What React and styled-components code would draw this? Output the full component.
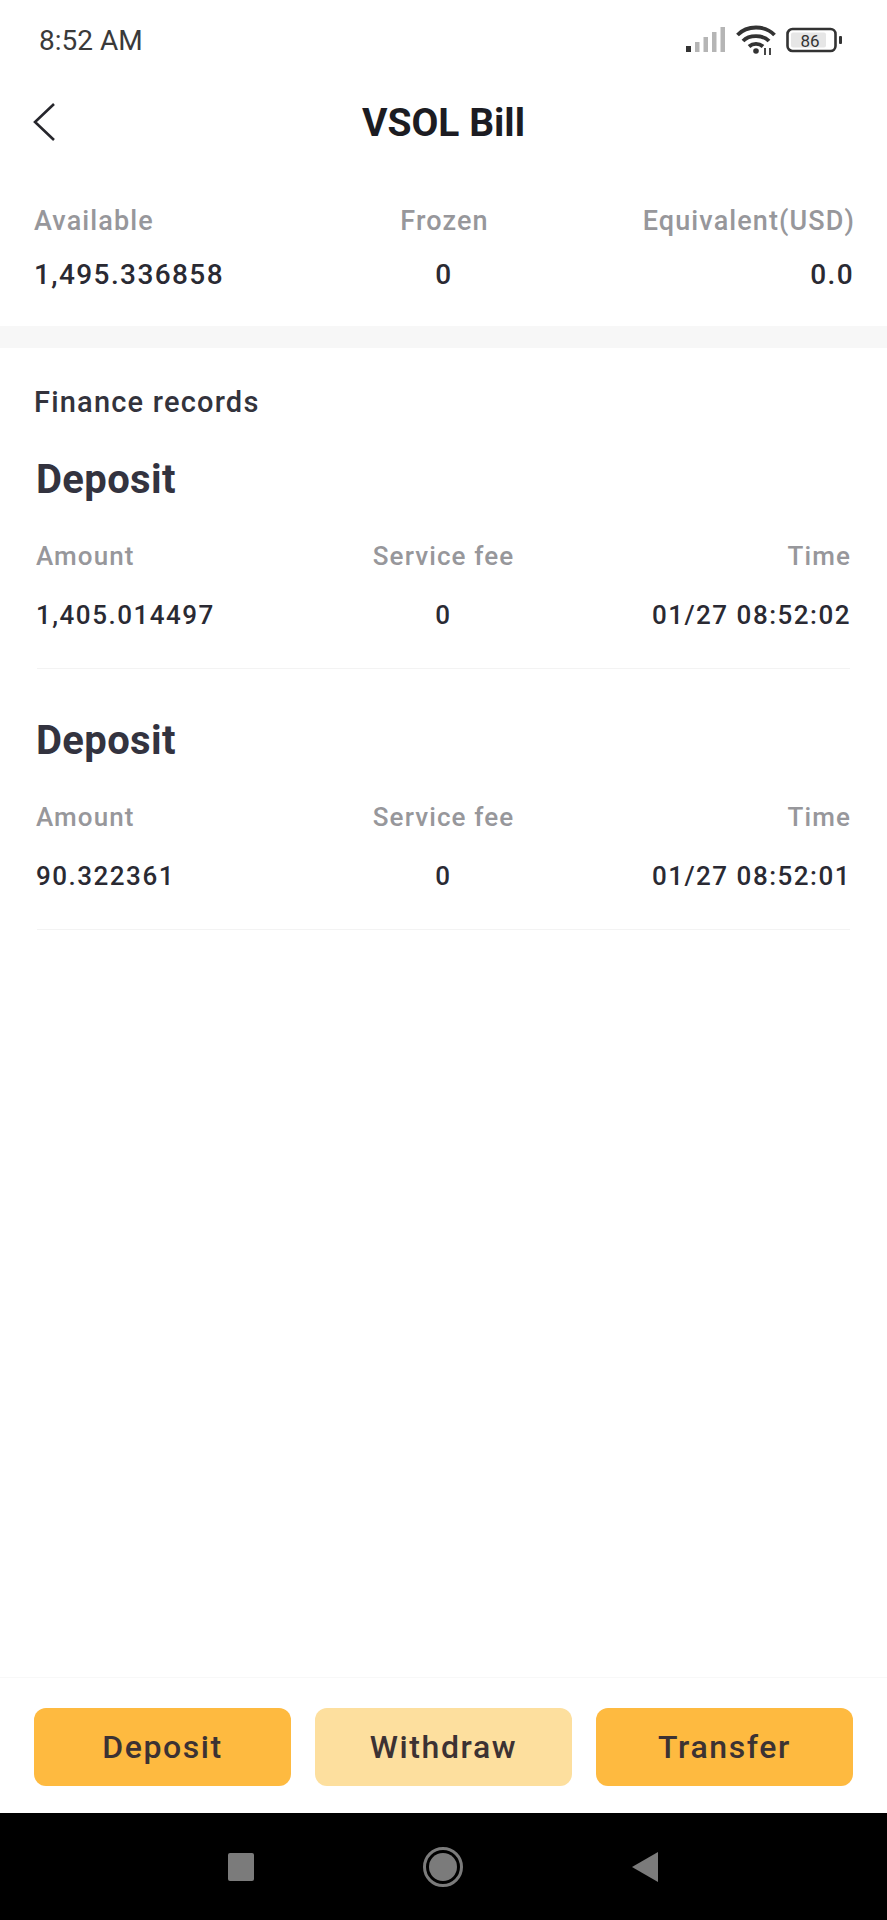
import React from "react";
import styled, { createGlobalStyle } from "styled-components";

const Global = createGlobalStyle`
  html, body { margin: 0; padding: 0; background: #fff; }
  * { box-sizing: border-box; }
`;

const Page = styled.div`
  width: 887px;
  height: 1920px;
  display: flex;
  flex-direction: column;
  background: #fff;
  font-family: Roboto, "Liberation Sans", sans-serif;
  overflow: hidden;
`;

const StatusBar = styled.div`
  height: 80px;
  padding: 0 43px 0 39px;
  display: flex;
  align-items: center;
  justify-content: space-between;
`;

const Clock = styled.span`
  font-size: 28px;
  color: #3a3a3a;
`;

const StatusIcons = styled.div`
  display: flex;
  align-items: center;
  gap: 10px;
`;

const Header = styled.div`
  height: 84px;
  padding: 1px 33px 0;
  display: flex;
  align-items: center;
  justify-content: center;
  position: relative;
`;

const Back = styled.svg`
  position: absolute;
  left: 32px;
  top: 22px;
`;

const Title = styled.h1`
  margin: 0;
  font-size: 39px;
  font-weight: 700;
  color: #1c1c22;
`;

const Row = styled.div`
  display: grid;
  grid-template-columns: 1fr 1fr 1fr;
  align-items: center;
  padding: 0 ${(p) => p.$right ?? p.$inset}px 0 ${(p) => p.$inset}px;
`;

const Label = styled.span`
  font-size: ${(p) => p.$size || 26}px;
  font-weight: 500;
  line-height: 34px;
  letter-spacing: 1.1px;
  color: #97979b;
  text-align: ${(p) => p.$align};
  white-space: nowrap;
`;

const Value = styled.span`
  font-size: ${(p) => p.$size || 26}px;
  font-weight: 500;
  line-height: 34px;
  letter-spacing: ${(p) => p.$spacing || 1.5}px;
  color: #2a2a33;
  text-align: ${(p) => p.$align};
  white-space: nowrap;
`;

const Summary = styled.div`
  padding-top: 40px;
  display: flex;
  flex-direction: column;
  gap: 20px;
  height: 162px;
`;

const Band = styled.div`
  height: 22px;
  background: #f7f7f7;
`;

const Section = styled.div`
  flex: 1;
  padding: 36px 0 0;
`;

const SectionTitle = styled.h2`
  margin: 0 34px;
  font-size: 29px;
  line-height: 36px;
  font-weight: 500;
  letter-spacing: 1.2px;
  color: #33333c;
`;

const Record = styled.div`
  margin-top: ${(p) => p.$top}px;
  display: flex;
  flex-direction: column;
`;

const RecordTitle = styled.h3`
  margin: 0 36px 34px;
  font-size: 40px;
  line-height: 50px;
  font-weight: 700;
  letter-spacing: 0.35px;
  color: #33333f;
`;

const RecordValues = styled(Row)`
  margin-top: 25px;
`;

const Divider = styled.div`
  height: 1px;
  margin: 36px 37px 0;
  background: #f3f3f3;
`;

const ActionBar = styled.div`
  height: 136px;
  padding: 30px 34px 0;
  display: grid;
  grid-template-columns: repeat(3, 1fr);
  gap: 24px;
  border-top: 1px solid #f8f8f8;
`;

const ActionButton = styled.button`
  height: 78px;
  border: none;
  border-radius: 12px;
  background: ${(p) => (p.$muted ? "#fddf9e" : "#feba40")};
  color: #3c3233;
  font-family: inherit;
  font-size: 32px;
  font-weight: 500;
  letter-spacing: 1.6px;
`;

const NavBar = styled.div`
  height: 107px;
  background: #000;
  display: flex;
  align-items: center;
  justify-content: center;
  gap: 168px;
  padding-right: 2px;
`;

export default function App() {
  const columns = ["left", "center", "right"];
  const records = [
    { amount: "1,405.014497", time: "01/27 08:52:02", top: 35 },
    { amount: "90.322361", time: "01/27 08:52:01", top: 47 },
  ];
  return (
    <Page>
      <Global />
      <StatusBar>
        <Clock>8:52 AM</Clock>
        <StatusIcons>
          <svg width="40" height="26" viewBox="0 0 40 26">
            <rect x="0" y="19" width="5" height="6" fill="#333" />
            <rect x="9" y="15" width="4.5" height="10" fill="#b5b5b5" />
            <rect x="17.5" y="10" width="4.5" height="15" fill="#b5b5b5" />
            <rect x="26" y="5" width="4.5" height="20" fill="#b5b5b5" />
            <rect x="34.5" y="0" width="4.5" height="25" fill="#b5b5b5" />
          </svg>
          <svg width="40" height="30" viewBox="0 0 40 30" fill="none" stroke="#333" strokeWidth="3.8">
            <path d="M1.5 10 C11 0 29 0 38.5 10" />
            <path d="M7 16 C13 9.5 27 9.5 33 16" />
            <path d="M13 21.5 C17 18 23 18 27 21.5" />
            <circle cx="20" cy="26" r="2.8" fill="#333" stroke="none" />
            <path d="M29 23 v7 M34 23 v7" strokeWidth="1.8" />
          </svg>
          <svg width="58" height="26" viewBox="0 0 58 26">
            <rect x="1.5" y="2" width="48" height="22" rx="5" fill="none" stroke="#333" strokeWidth="2.6" />
            <rect x="5" y="5.5" width="35" height="15" rx="2" fill="#e6e6e6" />
            <rect x="53" y="9" width="3" height="8" rx="1" fill="#333" />
            <text x="24" y="19.5" fontSize="17" textAnchor="middle" fill="#333" fontFamily="Roboto, sans-serif">86</text>
          </svg>
        </StatusIcons>
      </StatusBar>
      <Header>
        <Back width="24" height="40" viewBox="0 0 24 40" fill="none" stroke="#26262c" strokeWidth="2.6">
          <path d="M22 2 L3 20 L22 38" />
        </Back>
        <Title>VSOL Bill</Title>
      </Header>
      <Summary>
        <Row $inset={34} $right={32}>
          <Label $size={27} $align="left">Available</Label>
          <Label $size={27} $align="center">Frozen</Label>
          <Label $size={27} $align="right">Equivalent(USD)</Label>
        </Row>
        <Row $inset={34} $right={33}>
          <Value $size={28} $spacing={1.4} $align="left">1,495.336858</Value>
          <Value $size={28} $spacing={1.4} $align="center">0</Value>
          <Value $size={28} $spacing={1.4} $align="right">0.0</Value>
        </Row>
      </Summary>
      <Band />
      <Section>
        <SectionTitle>Finance records</SectionTitle>
        {records.map((r) => (
          <Record key={r.time} $top={r.top}>
            <RecordTitle>Deposit</RecordTitle>
            <Row $inset={36}>
              <Label $align={columns[0]}>Amount</Label>
              <Label $align={columns[1]}>Service fee</Label>
              <Label $align={columns[2]}>Time</Label>
            </Row>
            <RecordValues $inset={36}>
              <Value $align={columns[0]}>{r.amount}</Value>
              <Value $align={columns[1]}>0</Value>
              <Value $align={columns[2]}>{r.time}</Value>
            </RecordValues>
            <Divider />
          </Record>
        ))}
      </Section>
      <ActionBar>
        <ActionButton>Deposit</ActionButton>
        <ActionButton $muted>Withdraw</ActionButton>
        <ActionButton>Transfer</ActionButton>
      </ActionBar>
      <NavBar>
        <svg width="28" height="28" viewBox="0 0 28 28"><rect x="1" y="0" width="26" height="28" rx="2" fill="#7b7b7b" /></svg>
        <svg width="40" height="40" viewBox="0 0 40 40">
          <circle cx="20" cy="20" r="18.5" fill="none" stroke="#7b7b7b" strokeWidth="3" />
          <circle cx="20" cy="20" r="14" fill="#7b7b7b" />
        </svg>
        <svg width="28" height="32" viewBox="0 0 28 32"><path d="M27 1 V31 L1 16 Z" fill="#7b7b7b" /></svg>
      </NavBar>
    </Page>
  );
}
